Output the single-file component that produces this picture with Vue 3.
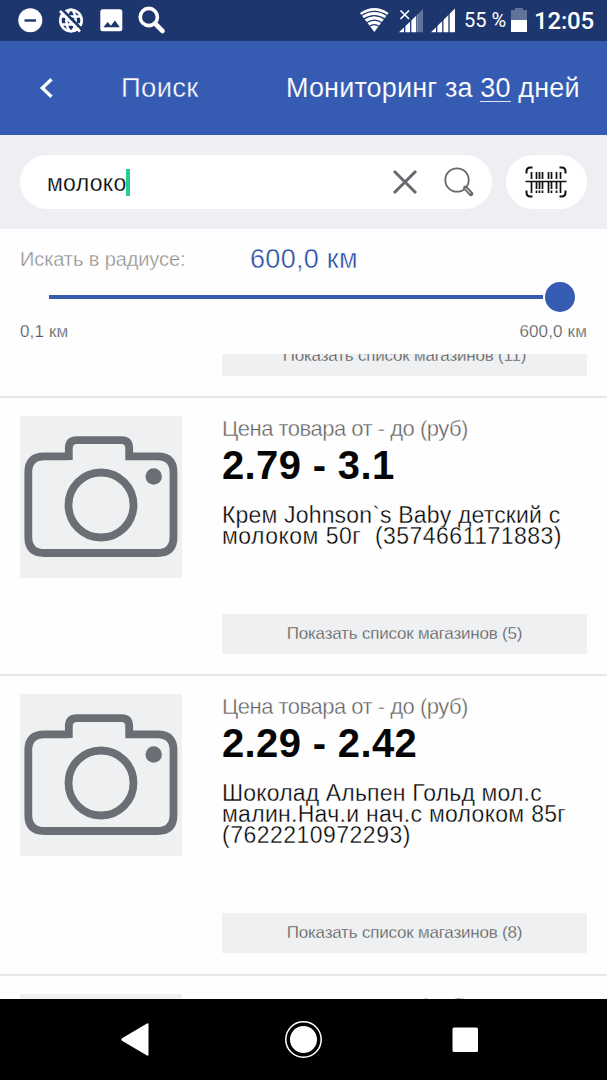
<script setup>
const items = [
  { price: '2.79 - 3.1', lines: ['Крем Johnson`s Baby детский с', 'молоком 50г  (3574661171883)'], fits: ['snug', 'loose'], count: 5, size: 'short' },
  { price: '2.29 - 2.42', lines: ['Шоколад Альпен Гольд мол.с', 'малин.Нач.и нач.с молоком 85г', '(7622210972293)'], fits: ['snug', 'medium', 'loose'], count: 8, size: 'tall' },
  { price: '', lines: [], fits: [], count: 0, size: 'peek' },
]
</script>

<template>
  <div class="screen">
    <div class="status">
      <svg class="status-left" width="180" height="41" viewBox="0 0 180 41">
        <circle cx="30.300" cy="20.300" r="12" fill="#fff" />
        <path d="M24.500 20.500h11.500" stroke="#1e366e" stroke-width="2.400" />
        <g fill="none" stroke="#fff" stroke-width="2.600">
          <circle cx="71" cy="20.500" r="10.700" />
          <ellipse cx="71" cy="20.500" rx="4.600" ry="10.700" />
          <path d="M61.500 16.500h19M61.500 24.500h19" />
        </g>
        <path d="M62 9.500L82 29.500" stroke="#1e366e" stroke-width="2.600" />
        <path d="M60 11L80 31.500" stroke="#fff" stroke-width="2.600" />
        <rect x="100.300" y="9.300" width="22" height="22" rx="2.500" fill="#fff" />
        <path d="M103.500 27.300l4.200-5.300 3.200 3.700 4-5.300 5 6.900z" fill="#1e366e" />
        <circle cx="148.800" cy="17" r="8.600" fill="none" stroke="#fff" stroke-width="3.600" />
        <path d="M155 23.500L162.500 31" stroke="#fff" stroke-width="4.600" stroke-linecap="round" />
      </svg>
      <div class="status-right">
        <svg width="100" height="41" viewBox="0 0 100 41">
          <path d="M14.300 32L0 13Q14.300 3 28.600 13z" fill="#fff" />
          <g fill="none" stroke="#1e366e" stroke-width="1.300">
            <path d="M1 15.800Q14.300 7 27.600 15.800" />
            <path d="M3.500 19.300Q14.300 12 25.100 19.300" />
            <path d="M6.500 22.800Q14.300 17.500 22.100 22.800" />
            <path d="M9.500 26.300Q14.300 23 19.100 26.300" />
          </g>
          <path d="M39 32.300L58 14V32.300z" fill="#fff" />
          <path d="M58 14l5-5v23.300h-5z" fill="#62729b" />
          <path d="M71 32.300L95 8.500V32.300z" fill="#fff" />
          <path d="M44.700 12v21M50.700 12v21M56.900 12v21M76.700 12v21M82.800 12v21M89 8v25" stroke="#1e366e" stroke-width="1.300" />
          <path d="M40.500 10.500l8.500 8.500M49 10.500L40.500 19" stroke="#1e366e" stroke-width="4" />
          <path d="M40.500 10.500l8.500 8.500M49 10.500L40.500 19" stroke="#fff" stroke-width="1.700" />
        </svg>
        <span class="percent">55 %</span>
        <svg width="16" height="41" viewBox="0 0 16 41">
          <path d="M0 10h4V8h8v2h4v10H0z" fill="#62729b" />
          <path d="M0 20h16v12H0z" fill="#fff" />
        </svg>
        <span class="clock">12:05</span>
      </div>
    </div>

    <header class="header">
      <svg class="back" width="16" height="24" viewBox="0 0 16 24">
        <path d="M12.500 3.200L3.300 12l9.200 8.800" fill="none" stroke="#fff" stroke-width="3.300" />
      </svg>
      <span class="search-title">Поиск</span>
      <span class="monitor">Мониторинг за <span class="days">30</span> дней</span>
    </header>

    <div class="search">
      <div class="field">
        <span class="query">молоко</span><i class="caret"></i>
        <svg class="clear" width="26" height="26" viewBox="0 0 26 26">
          <path d="M2 2l22 22M24 2L2 24" stroke="#65686c" stroke-width="3" />
        </svg>
        <svg class="lens" width="30" height="30" viewBox="0 0 30 30">
          <circle cx="13" cy="13" r="11.700" fill="none" stroke="#65686c" stroke-width="1.800" />
          <path d="M21.500 21l5.500 5.800" stroke="#65686c" stroke-width="4.600" stroke-linecap="round" />
          <path d="M21.500 21.200l5 5.200" stroke="#d5d6d7" stroke-width="1.200" />
        </svg>
      </div>
      <div class="scan">
        <svg width="42" height="32" viewBox="0 0 42 32">
          <g fill="none" stroke="#111" stroke-width="2">
            <path d="M1.500 7.500V5.500Q1.500 1.500 5.500 1.500H7.500M34.500 1.500h2q4 0 4 4v2M1.500 24.500v2q0 4 4 4h2M34.500 30.500h2q4 0 4-4v-2" />
            <path d="M0.500 15.500h41" stroke-width="1.700" />
            <path d="M6.500 6v7M11.500 6v7M14.500 6v7M17.500 6v7M23.500 6v7M26.500 6v7M31.500 6v7M35.500 6v7" stroke-width="1.700" />
            <path d="M6.500 15v12M11.500 15v8M14.500 15v8M17.500 15v8M23.500 15v12M26.500 15v8M31.500 15v8M35.500 15v12M11.500 24.500v2.500M14.500 24.500v2.500M17.500 24.500v2.500M26.500 24.500v2.500M31.500 24.500v2.500" stroke-width="1.700" />
          </g>
        </svg>
      </div>
    </div>

    <section class="radius">
      <div class="radius-head">
        <span class="radius-label">Искать в радиусе:</span>
        <span class="radius-value">600,0 км</span>
      </div>
      <div class="slider"><i class="track"></i><i class="knob"></i></div>
      <div class="range"><span>0,1 км</span><span>600,0 км</span></div>
    </section>

    <main class="list">
      <div class="partial"><div class="shops">Показать список магазинов (11)</div></div>
      <article v-for="item in items" :key="item.size" class="item" :class="item.size">
        <div class="photo">
          <svg v-if="item.count" width="162" height="162" viewBox="0 0 162 162" fill="none" stroke="#6b6e75" stroke-width="7.800">
            <path d="M48.800 44V32.500Q48.800 24.200 57 24.200h44.500q7.700 0 7.700 8.300v7.800h28.300q16 0 16 16v64.700q0 16-16 16H24.300q-16 0-16-16V56.300q0-16 16-16h24.500" />
            <circle cx="81" cy="89" r="32.500" />
            <circle cx="133.700" cy="60.500" r="8.200" fill="#6b6e75" stroke="none" />
          </svg>
        </div>
        <div class="info">
          <div class="note">Цена товара от - до (руб)</div>
          <template v-if="item.count">
            <div class="price">{{ item.price }}</div>
            <div class="name">
              <div v-for="(line, i) in item.lines" :key="i" :class="item.fits[i]">{{ line }}</div>
            </div>
            <div class="shops">Показать список магазинов ({{ item.count }})</div>
          </template>
        </div>
      </article>
    </main>

    <nav class="nav">
      <svg width="607" height="81" viewBox="0 0 607 81" fill="#fff">
        <path d="M148.500 25.300v30.400q0 1.500-1.500.8L122 41.800q-1.700-1.300 0-2.600L147 24.500q1.500-.7 1.500.8z" />
        <circle cx="303.500" cy="40.500" r="13.500" />
        <circle cx="303.500" cy="40.500" r="17.700" fill="none" stroke="#fff" stroke-width="1.500" />
        <rect x="452.500" y="28.500" width="25.500" height="24.500" rx="1.500" />
      </svg>
    </nav>
  </div>
</template>

<style>
body { background: #fff; }
</style>

<style scoped>
.screen { width: 607px; height: 1080px; display: flex; flex-direction: column; overflow: hidden; background: #fefefe; font-family: "Liberation Sans", Arial, sans-serif; white-space: pre; }
.screen svg { display: block; flex: none; }
.status { height: 41px; flex: none; display: flex; background: #1e366e; color: #fff; font-family: Roboto, sans-serif; line-height: 41px; }
.status-right { display: flex; margin-left: 180px; }
.percent { width: 47px; margin-left: 4px; font-size: 20px; }
.clock { margin-left: 7px; padding-top: 1px; height: 40px; font-size: 24px; font-weight: 500; letter-spacing: -0.200px; }
.header { height: 94px; flex: none; display: flex; align-items: center; background: #365bb2; color: #fff; font-size: 27px; }
.back { margin-left: 39px; }
.search-title { margin-left: 66px; width: 100px; font-size: 27.500px; letter-spacing: 0.300px; -webkit-text-stroke: 0.400px #365bb2; }
.monitor { margin-left: 65px; letter-spacing: 0.150px; -webkit-text-stroke: 0.150px #365bb2; }
.days { border-bottom: 1.500px solid #e0e6f5; display: inline-block; line-height: 26px; }
.search { height: 94px; flex: none; display: flex; align-items: center; padding-left: 20px; gap: 14px; background: #edeff2; }
.field { width: 472px; height: 54px; box-sizing: border-box; display: flex; align-items: center; background: #fff; border-radius: 27px; padding-left: 27px; }
.query { font-size: 23px; color: #000; letter-spacing: 0.300px; padding-top: 2px; -webkit-text-stroke: 0.250px #fff; }
.caret { width: 4px; height: 27px; background: #22ce88; }
.clear { margin-left: auto; }
.lens { margin-left: 26px; margin-right: 18px; }
.scan { width: 81px; height: 54px; display: flex; align-items: center; justify-content: center; border-radius: 27px; background: #fff; }
.scan svg { margin-right: 1px; }
.radius { height: 125px; flex: none; }
.radius-head { height: 50px; display: flex; align-items: center; padding: 5px 0 0 20px; }
.radius-label { width: 230px; font-size: 20px; color: #8c8c8c; letter-spacing: -0.100px; -webkit-text-stroke: 0.350px #fefefe; }
.radius-value { font-size: 27px; color: #2448a0; letter-spacing: 0.300px; -webkit-text-stroke: 0.450px #fefefe; }
.slider { height: 30px; display: flex; align-items: center; margin-left: 49px; gap: 2px; margin-top: -2px; }
.track { width: 494px; height: 4px; background: #365bad; }
.knob { width: 30px; height: 30px; border-radius: 50%; background: #365bb2; }
.range { display: flex; justify-content: space-between; padding: 10px 20px 0; font-size: 17px; line-height: 20px; letter-spacing: 0.150px; color: #55585c; -webkit-text-stroke: 0.250px #fefefe; }
.list { height: 645px; flex: none; overflow: hidden; }
.partial { height: 22px; overflow: hidden; display: flex; padding-left: 222px; margin-bottom: 20px; }
.partial .shops { margin-top: -19px; height: 41px; line-height: 42px; }
.item { display: flex; box-sizing: border-box; padding: 18px 20px 0; border-top: 2px solid #e6e7e8; }
.item.short { height: 278px; }
.item.tall { height: 300px; }
.item.tall .info { padding-bottom: 21px; }
.photo { width: 162px; height: 162px; flex: none; background: #eef0f2; }
.info { margin-left: 40px; width: 365px; display: flex; flex-direction: column; padding-bottom: 20px; }
.note { font-size: 22px; line-height: 26px; color: #606060; letter-spacing: -0.500px; -webkit-text-stroke: 0.400px #fefefe; }
.price { font-size: 40px; font-weight: 700; line-height: 46px; color: #050505; letter-spacing: 0.350px; }
.name { margin-top: 17px; font-size: 23px; line-height: 21px; color: #000; -webkit-text-stroke: 0.350px #fefefe; }
.snug { letter-spacing: 0.170px; }
.medium { letter-spacing: 0.290px; }
.loose { letter-spacing: 0.480px; }
.shops { width: 365px; height: 40px; flex: none; margin-top: auto; text-align: center; background: #eef0f2; color: #505357; font-size: 17px; line-height: 40px; letter-spacing: -0.200px; -webkit-text-stroke: 0.300px #eef0f2; }
.nav { height: 81px; flex: none; background: #000; }
</style>
